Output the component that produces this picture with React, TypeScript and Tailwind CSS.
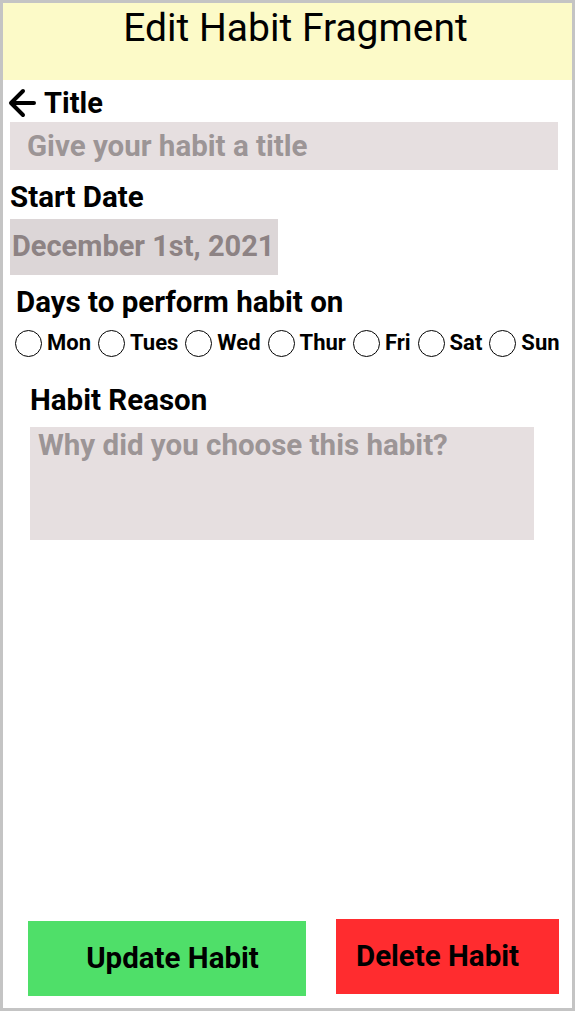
const days = ["Mon", "Tues", "Wed", "Thur", "Fri", "Sat", "Sun"];

function BackArrow() {
  return (
    <svg width="28" height="30" viewBox="0 0 28 30" fill="none">
      <path d="M26 15H4M15 3L3 15l12 12" stroke="black" strokeWidth="4" strokeLinecap="round" strokeLinejoin="round" />
    </svg>
  );
}

export default function App() {
  return (
    <div
      className="w-[575px] h-[1011px] border-[3px] border-[#c4c4c4] bg-white flex flex-col text-black"
      style={{ fontFamily: "Roboto, 'Noto Sans', sans-serif" }}
    >
      <header className="h-[77px] bg-[#fcfac8] flex justify-center pl-4 shrink-0">
        <h1 className="text-[39px] leading-[50px] font-normal">Edit Habit Fragment</h1>
      </header>

      <div className="flex items-center gap-2 pl-[5px] pt-[6px]">
        <BackArrow />
        <span className="text-[29px] font-bold leading-[34px]">Title</span>
      </div>

      <div className="ml-[7px] mr-[14px] mt-[2px] h-[48px] bg-[#e6dfe0] flex items-center pl-[17px]">
        <span className="text-[29.5px] font-bold text-[#9c9596]">Give your habit a title</span>
      </div>

      <div className="pl-[7px] mt-[10px] text-[29.5px] font-bold leading-[34px]">Start Date</div>

      <div className="ml-[7px] mt-[5px] w-[268px] h-[56px] bg-[#dcd6d7] flex items-center pl-[2px]">
        <span className="text-[29px] font-bold text-[#8d8384]">December 1st, 2021</span>
      </div>

      <div className="pl-[13px] mt-[10px] text-[29.5px] font-bold leading-[34px]">Days to perform habit on</div>

      <div className="flex items-center pl-[12px] mt-[10px] gap-[7px]">
        {days.map((d) => (
          <label key={d} className="flex items-center gap-[5px]">
            <span className="w-[27px] h-[27px] rounded-full border-[1.5px] border-black inline-block" />
            <span className="text-[22px] font-bold leading-[28px]">{d}</span>
          </label>
        ))}
      </div>

      <div className="pl-[27px] mt-[26px] text-[29.5px] font-bold leading-[34px]">Habit Reason</div>

      <div className="ml-[27px] mt-[10px] w-[504px] h-[113px] bg-[#e6dfe0] pl-[8px] pt-[1px]">
        <span className="text-[29.5px] font-bold text-[#9c9596] leading-[34px]">Why did you choose this habit?</span>
      </div>

      <div className="flex-1" />

      <div className="flex items-start justify-between pl-[25px] pr-[13px] pb-[12px]">
        <button className="mt-[2px] w-[278px] h-[75px] bg-[#4fdf69] text-[29.5px] font-bold pl-[11px]">Update Habit</button>
        <button className="w-[223px] h-[75px] bg-[#ff2c2f] text-[29.5px] font-bold pr-[20px]">Delete Habit</button>
      </div>
    </div>
  );
}
